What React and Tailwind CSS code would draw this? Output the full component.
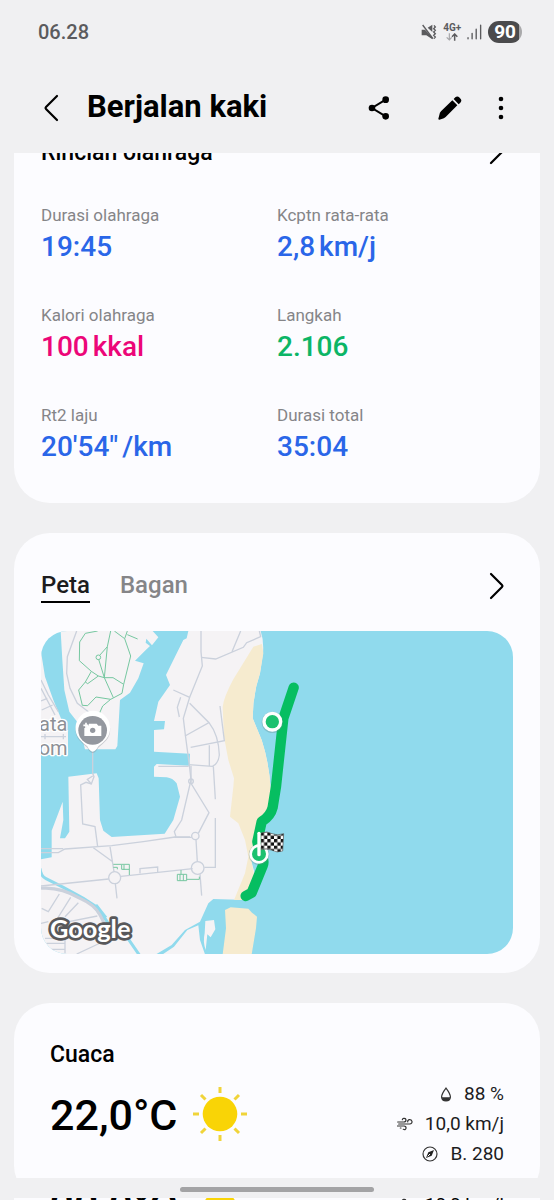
import { useState } from "react";

const stats = [
  { label: "Durasi olahraga", value: "19:45", color: "text-[#2a66e8]" },
  { label: "Kcptn rata-rata", value: "2,8", unit: "km/j", color: "text-[#2a66e8]" },
  { label: "Kalori olahraga", value: "100", unit: "kkal", color: "text-[#ec0678]" },
  { label: "Langkah", value: "2.106", color: "text-[#0cb566]" },
  { label: "Rt2 laju", value: "20'54\"", unit: "/km", color: "text-[#2a66e8]" },
  { label: "Durasi total", value: "35:04", color: "text-[#2a66e8]" },
];

const Chevron = ({ className }) => (
  <svg viewBox="0 0 16 28" className={className} fill="none" stroke="currentColor" strokeWidth="2.2" strokeLinecap="round" strokeLinejoin="round">
    <path d="M2 2 L13 13 Q14 14 13 15 L2 26" />
  </svg>
);

const StatusBar = () => (
  <div className="flex h-16 items-center justify-between pl-[38px] pr-8 text-[#5b5b5e]">
    <span className="text-xl font-medium">06.28</span>
    <div className="flex items-center gap-1.5">
      <svg viewBox="0 0 48 48" className="h-4 w-4" fill="currentColor">
        <path d="M2 17 H12 L34 40 V46 L16 34 H2 Z M20 11 L34 2 V24 Z" />
        <path d="M5 3 L36 44" stroke="currentColor" strokeWidth="4" />
        <path d="M39 4 L43 9 L38 14 L43 19 L38 24 L43 29 L38 34 L43 39 L39 44" fill="none" stroke="currentColor" strokeWidth="4" />
      </svg>
      <div className="flex flex-col items-center text-[10px] font-bold leading-[10px]">
        <span>4G+</span>
        <svg viewBox="0 0 36 24" className="h-2 w-3" fill="none" strokeWidth="3.5">
          <path d="M10 1 V20 M2 13 L10 21 L17 13" stroke="#a5a5a8" />
          <path d="M26 23 V4 M18 11 L26 3 L34 11" stroke="currentColor" strokeWidth="4.5" />
        </svg>
      </div>
      <svg viewBox="0 0 44 46" className="h-4 w-[15px]" stroke="currentColor" strokeWidth="4" strokeLinecap="round">
        <path d="M3 40 V43 M15 27 V43 M27 15 V43 M40 3 V43" />
      </svg>
      <div className="rounded-full bg-gradient-to-r from-[#4b4b4d] from-90% to-[#a9a9ab] to-90% px-1.5 text-[19px] font-bold leading-[22px] text-white">
        90
      </div>
    </div>
  </div>
);

const Header = () => (
  <header className="shrink-0">
    <StatusBar />
    <div className="flex h-[89px] items-center pl-[43px] pr-[50px] pb-0.5">
      <button type="button" aria-label="Kembali" className="mr-7">
        <Chevron className="h-7 w-4 rotate-180" />
      </button>
      <h1 className="flex-1 text-[31px] font-bold">Berjalan kaki</h1>
      <button type="button" aria-label="Bagikan" className="mr-12">
        <svg viewBox="0 0 64 72" className="h-6 w-[22px]" fill="currentColor">
          <circle cx="11" cy="36" r="10" />
          <circle cx="52" cy="11" r="10" />
          <circle cx="52" cy="61" r="10" />
          <path d="M52 11 L11 36 L52 61" fill="none" stroke="currentColor" strokeWidth="6" />
        </svg>
      </button>
      <button type="button" aria-label="Edit" className="mr-9">
        <svg viewBox="0 0 72 72" className="h-6 w-6" fill="currentColor">
          <path d="M43 13 L58 28 L23 63 Q18 68 11 69 L4 71 Q1 71 1 68 L4 57 Q5 50 9 46 Z" />
          <path d="M47 9 L52 4 Q58 -2 65 5 Q74 13 67 20 L62 25 Z" />
        </svg>
      </button>
      <button type="button" aria-label="Opsi lainnya">
        <svg viewBox="0 0 6 24" className="h-6 w-1.5" fill="currentColor">
          <circle cx="3" cy="3" r="2.3" />
          <circle cx="3" cy="12" r="2.3" />
          <circle cx="3" cy="21" r="2.3" />
        </svg>
      </button>
    </div>
  </header>
);

const RouteMap = () => (
  <svg viewBox="33 33 1416 969" className="mt-7 block h-auto w-full rounded-[26px]" role="img" aria-label="Peta rute">
    <defs>
      <pattern id="checks" width="20" height="20" patternUnits="userSpaceOnUse" patternTransform="translate(692 637)">
        <path d="M0 0 H20 V20 H0 Z" fill="#fff" />
        <path d="M0 0 H10 V10 H0 Z M10 10 H20 V20 H10 Z" fill="#111" />
      </pattern>
    </defs>
    <rect x="30" y="30" width="1425" height="980" fill="#90daed" />

    {/* land */}
    <g fill="#f5f3f5">
      <path d="M33 95 L45 170 L70 240 L95 300 L114 335 V405 H33 Z" />
      <path d="M92 33 H368 L385 52 L366 76 L349 56 L347 68 L360 78 L345 92 L315 122 L341 130 L325 175 L300 218 L270 240 L262 378 L256 388 H165 L145 310 L118 275 L103 210 L97 120 Z" />
      <path d="M115 470 L200 460 L206 475 L210 600 L220 632 L245 651 L404 641 L430 600 L450 530 L440 490 Q428 474 410 472 L372 470 V440 L380 432 L478 437 L480 401 L372 395 V330 L402 328 L405 303 H372 L385 245 L420 195 L408 165 L445 90 L460 60 L470 55 L475 33 H692 Q702 62 699 100 L690 160 Q668 225 668 295 L695 360 Q718 430 722 510 L715 570 L680 620 L660 710 L680 780 L650 840 L550 837 L535 850 L510 905 L465 930 L425 975 L378 1003 H33 V718 L65 712 V632 L98 545 L100 600 L90 655 H105 L118 635 Z" />
      <path d="M398 1003 L432 980 L472 930 L505 916 L510 960 L525 1003 Z" />
      <path d="M526 903 L552 900 L556 928 L542 952 L532 943 L527 990 Q518 965 524 940 Z" />
    </g>

    {/* beach */}
    <g fill="#f6ebcf">
      <path d="M670 80 L696 72 L700 100 L690 160 Q668 225 668 295 L695 360 Q718 430 722 510 L715 570 L680 620 L662 710 L675 780 L645 840 H612 L645 760 L655 710 L645 660 L625 610 L600 590 L610 500 L612 475 L595 420 L582 350 L578 260 Q582 230 610 178 Z" />
      <path d="M585 870 L602 862 L655 866 L666 878 L681 890 L678 925 L665 1003 H578 L588 925 Z" />
    </g>

    {/* rivers */}
    <g fill="none" stroke="#90daed" strokeWidth="9">
      <path d="M30 745 Q32 768 48 776 L100 802 L160 835 L202 862 L235 910 L290 950 L328 1005" />
      <path d="M195 857 L225 895" strokeWidth="16" />
    </g>

    {/* roads */}
    <g fill="none" stroke="#cbd1dc" strokeWidth="4">
      <path d="M140 33 L112 110 L110 160 L120 205 L142 250 L175 275 L205 282" />
      <path d="M33 180 L55 225 L85 275 M33 205 L75 285 M33 243 L52 235 M35 270 L68 255 M33 350 H108 M45 342 V358 M100 342 V358" />
      <path d="M188 395 V460 L192 470 L184 492 L168 487 L152 495 L158 612 L195 620 L203 680" />
      <path d="M184 492 L172 478 L188 468" />
      <path d="M33 698 H85 L105 687 L245 677 L340 665 L435 651 L480 651" strokeWidth="4" />
      <path d="M33 686 H100 M190 683 L246 724 M240 680 L252 755" />
      <circle cx="254" cy="773" r="18" />
      <path d="M33 798 L236 777 M273 769 L488 746 M256 791 L261 835 M330 760 V746 L383 741 V756" />
      <path d="M33 805 Q90 800 150 835 Q195 855 210 885 L225 915" strokeWidth="9" />
      <path d="M35 865 L55 875 L88 822 M70 915 L122 832 M105 890 L145 848 M90 910 L202 888 M33 910 L55 905 M45 955 H105 V1000 M50 970 H105 M60 988 H105 M140 1002 L230 960" />
      <path d="M513 33 V95 L517 138 L479 232 L460 295 L466 345 L478 435 L483 480 L455 600 L433 635 L438 650" />
      <path d="M513 112 L557 117 L640 82 L650 68 L692 50 L688 33 M632 33 L606 95" />
      <path d="M430 210 L479 232 M452 232 L442 262 L448 291 M479 250 L537 308 L465 348 M537 308 Q566 345 568 405 Q565 432 547 439 L476 434 M385 439 H476" />
      <path d="M570 258 L583 362 L482 382 M538 376 V438 M550 439 L556 538 M556 594 V742 H523" />
      <path d="M483 437 V490 L537 578 L505 640" />
      <circle cx="483" cy="484" r="7" />
      <circle cx="496" cy="648" r="11" />
      <path d="M433 652 L485 652 M498 659 L502 725 M510 763 L515 827" />
      <circle cx="503" cy="744" r="19" />
    </g>

    {/* park trails */}
    <g fill="none" stroke="#76c7a0" strokeWidth="3">
      <path d="M203 33 L166 40 L149 66 L148 122 L184 154 L205 168 L223 173 L249 173 L281 193 L302 108 L284 56 L253 33" />
      <path d="M242 33 L232 80 L223 173 L250 233 M232 80 L209 106 M206 118 L223 173 M292 33 L284 56 M292 44 L323 57" />
      <circle cx="205" cy="112" r="7" />
      <path d="M184 154 L166 186 L173 191 L205 168 M166 186 L146 210 L157 256 L173 257 L198 231 L242 238 L276 220 L281 193 M242 238 L218 258 L207 283" />
      <path d="M250 733 H298 V765 M250 742 H262 V748 M275 735 V748 H298 M282 735 V750" />
      <path d="M442 763 H470 V782 H442 Z M450 763 V782 M460 763 V782 M453 750 V763 M470 778 H508 V770" />
    </g>

    {/* walked track */}
    <path d="M791 203 L760 295 L738 500 L728 562 Q722 588 695 605 L682 665 L690 705 Q705 720 698 738 L665 818 L647 828" fill="none" stroke="#06be61" strokeWidth="31" strokeLinecap="round" strokeLinejoin="round" />
    <circle cx="727" cy="307" r="32" fill="#698b8b" opacity=".35" />
    <circle cx="727" cy="305" r="30" fill="#fff" />
    <circle cx="727" cy="305" r="20" fill="#1bc16f" />
    <circle cx="687" cy="704" r="31" fill="#698b8b" opacity=".35" />
    <circle cx="687" cy="702" r="25" fill="#1bc16f" stroke="#fff" strokeWidth="8" />
    <path d="M693 639 Q712 632 726 641 Q742 648 761 641 L758 693 Q742 700 724 690 Q710 685 693 689 Z" fill="url(#checks)" stroke="#555" strokeWidth="2" />
    <path d="M687 640 V704" stroke="#fff" strokeWidth="10" strokeLinecap="round" />

    {/* labels */}
    <g fill="#8d9096" stroke="#fff" strokeWidth="8" strokeLinejoin="round" fontFamily="Roboto, sans-serif" fontSize="60" textAnchor="end" style={{ paintOrder: "stroke" }}>
      <text x="112" y="332">ata</text>
      <text x="113" y="404">om</text>
    </g>
    <path d="M188 399 Q180 399 172 383 Q160 375 148 361 A52 52 0 1 1 229 361 Q216 375 205 383 Q196 399 188 399 Z" fill="#8a8f95" opacity=".4" />
    <path d="M188 395 Q180 395 172 379 Q160 371 148 357 A52 52 0 1 1 229 357 Q216 371 205 379 Q196 395 188 395 Z" fill="#fff" />
    <circle cx="188" cy="331" r="43" fill="#94989f" />
    <path d="M163 324 H169 V317 H177 V311 H200 L205 317 H214 V348 H163 Z" fill="#fff" />
    <path d="M168 308 V324 M160 316 H176" stroke="#fff" strokeWidth="5" />
    <circle cx="188" cy="331" r="8" fill="#94989f" />
    <text x="60" y="954" fill="#fff" stroke="#58585a" strokeWidth="16" strokeLinejoin="round" fontFamily="Lato, sans-serif" fontWeight="700" fontSize="76" style={{ paintOrder: "stroke" }}>Google</text>
  </svg>
);

const Sun = ({ className }) => (
  <svg viewBox="0 0 54 54" className={`h-[54px] w-[54px] shrink-0 ${className}`}>
    <circle cx="27" cy="27" r="17.3" fill="#f9d406" />
    <path d="M27 0 V6 M27 48 V54 M0 27 H6 M48 27 H54 M8 8 L12.500 12.500 M41.500 41.500 L46 46 M46 8 L41.500 12.500 M12.500 41.500 L8 46" stroke="#f0d43a" strokeWidth="3" />
  </svg>
);

const Wind = () => (
  <svg viewBox="0 0 48 40" className="h-[14px] w-4" fill="none" stroke="#333" strokeWidth="3.600" strokeLinecap="round">
    <path d="M2 14 H20 Q27 14 27 8 Q26 2 20 3 Q16 4 16 7" />
    <path d="M5 20 H38 Q46 19 45 12 Q43 6 36 7 Q31 9 32 14" />
    <path d="M1 26 H21 Q28 27 27 33 Q25 39 19 36 M10 32 H12" />
  </svg>
);

const Weather = () => (
  <section className="shrink-0 rounded-[36px] bg-[#fcfcff] px-9 pt-9 pb-8">
    <h2 className="text-[23px] font-medium leading-8">Cuaca</h2>
    <div className="mt-2 flex items-start justify-between">
      <div className="flex items-start gap-4 pt-2">
        <span className="text-[43px] font-medium leading-[56px]">22,0°C</span>
        <Sun />
      </div>
      <ul className="flex flex-col items-end text-[19px] leading-[30px] text-[#1c1c1e]">
        <li className="flex items-center gap-3">
          <svg viewBox="0 0 32 44" className="h-[15px] w-3">
            <path d="M16 3 Q29 20 29 29 Q28 41 16 41 Q4 41 3 29 Q3 20 16 3 Z" fill="none" stroke="#333" strokeWidth="3.500" />
            <path d="M4 30 H28 Q27 41 16 41 Q5 41 4 30 Z" fill="#333" />
          </svg>
          88 %
        </li>
        <li className="flex items-center gap-3">
          <Wind />
          10,0 km/j
        </li>
        <li className="flex items-center gap-3">
          <svg viewBox="0 0 48 48" className="h-4 w-4">
            <circle cx="24" cy="24" r="21" fill="none" stroke="#333" strokeWidth="3.500" />
            <path d="M36 12 L29 29 L12 36 L19 19 Z" fill="#222" />
            <path d="M24 24 L17 31" stroke="#fff" strokeWidth="3" />
          </svg>
          B. 280
        </li>
      </ul>
    </div>
  </section>
);

export default function App() {
  const [tab, setTab] = useState("Peta");

  return (
    <div className="flex h-screen flex-col overflow-hidden bg-[#f0f0f2] font-['Roboto',sans-serif] text-black">
      <Header />

      <main className="flex min-h-0 flex-1 flex-col gap-[30px] overflow-hidden px-[14px]">
        <section className="-mt-12 shrink-0 rounded-[36px] bg-[#fcfcff] px-[27px] pt-7 pb-[38px]">
          <div className="flex h-9 items-center justify-between pr-2">
            <h2 className="pt-1 text-[23px] font-medium">Rincian olahraga</h2>
            <Chevron className="h-7 w-4" />
          </div>
          <dl className="mt-[34px] grid grid-cols-2 gap-y-[38px]">
            {stats.map((s) => (
              <div key={s.label}>
                <dt className="text-[17px] leading-6 text-[#858588]">{s.label}</dt>
                <dd className={`mt-0.5 flex gap-1 text-[28px] font-medium leading-9 ${s.color}`}>
                  <span>{s.value}</span>
                  {s.unit && <span>{s.unit}</span>}
                </dd>
              </div>
            ))}
          </dl>
        </section>

        <section className="shrink-0 rounded-[36px] bg-[#fcfcff] px-[27px] pt-9 pb-[19px]">
          <div className="flex items-center justify-between pr-2">
            <div className="flex gap-[30px]">
              {["Peta", "Bagan"].map((name) => (
                <button
                  key={name}
                  type="button"
                  onClick={() => setTab(name)}
                  className={`border-b-2 text-2xl font-medium leading-8 ${
                    tab === name ? "border-black text-[#1c1c1e]" : "border-transparent text-[#858588]"
                  }`}
                >
                  {name}
                </button>
              ))}
            </div>
            <button type="button" aria-label="Buka peta">
              <Chevron className="h-7 w-4" />
            </button>
          </div>
          <RouteMap />
        </section>

        <Weather />
      </main>

      <footer className="flex shrink-0 flex-col items-center pt-[9px]">
        <div className="h-[5px] w-[194px] rounded-full bg-[#a3a3a5]" />
        <div className="mt-1.5 h-0.5 self-stretch overflow-hidden px-[14px]" aria-hidden="true">
          <div className="flex items-start justify-between bg-[#fcfcff] px-9">
            <div className="flex items-start gap-4">
              <span className="-mt-5 text-[43px] font-medium leading-[56px]">22,0°C</span>
              <Sun className="-mt-4" />
            </div>
            <span className="-mt-2 flex items-center gap-3 text-[19px] leading-[30px]">
              <Wind />
              10,0 km/j
            </span>
          </div>
        </div>
      </footer>
    </div>
  );
}
